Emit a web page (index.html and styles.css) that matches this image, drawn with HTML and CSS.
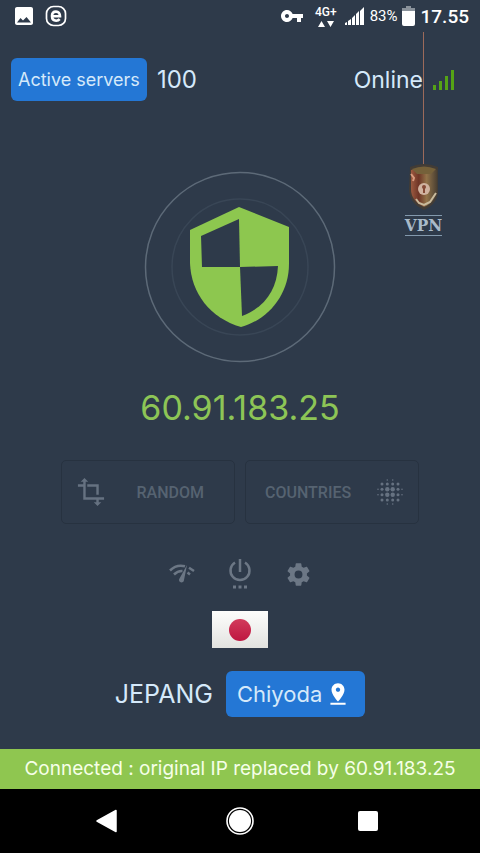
FILE: index.html
```html
<!DOCTYPE html>
<html lang="en">
<head>
<meta charset="utf-8">
<meta name="viewport" content="width=device-width, initial-scale=1">
<title>VPN</title>
<link rel="stylesheet" href="styles.css">
</head>
<body>
<div class="screen">
  <header class="status">
    <div class="status-group notices">
      <svg width="24" height="24" viewBox="0 0 24 24" fill="#fff" aria-hidden="true"><path d="M21 19V5c0-1.1-.9-2-2-2H5c-1.1 0-2 .9-2 2v14c0 1.1.9 2 2 2h14c1.1 0 2-.9 2-2zM5 18.500l3.500-4.500 2.500 2.500L14.500 13l4.500 5.500z"/></svg>
      <svg width="22" height="22" viewBox="0 0 22 22" fill="none" stroke="#fff" aria-hidden="true"><rect x="1.500" y="1.500" width="19" height="19" rx="7" stroke-width="1.700"/><path d="M7 11.300h8c0-3-1.500-4.700-4-4.700s-4 1.700-4 4.500 1.600 4.600 4.200 4.600c1.500 0 2.600-.5 3.500-1.500" stroke-width="2.600"/></svg>
    </div>
    <div class="status-group">
      <svg class="key" width="24" height="24" viewBox="0 0 24 24" fill="#fff" aria-hidden="true"><path d="M12.650 10C11.830 7.670 9.610 6 7 6c-3.310 0-6 2.690-6 6s2.690 6 6 6c2.610 0 4.830-1.670 5.650-4H17v4h4v-4h2v-4H12.650zM7 14c-1.100 0-2-.9-2-2s.9-2 2-2 2 .9 2 2-.9 2-2 2z"/></svg>
      <div class="network">
        <span>4G+</span>
        <svg width="16" height="6" viewBox="0 0 16 6" fill="#fff" aria-hidden="true"><path d="M0 6L3.500 0 7 6zM9 0h7l-3.500 6z"/></svg>
      </div>
      <svg class="signal" width="19" height="18" viewBox="0 0 19 18" fill="#fff" aria-hidden="true"><path d="M0 18v-2l2-1v3zM3 18v-4l3-2v6zM7 18v-7l3-3v10zM11 18V7l3-3v14zM15 18V4l4-4v18z"/></svg>
      <span class="percent">83%</span>
      <svg class="battery" width="13" height="20" viewBox="0 0 13 20" aria-hidden="true"><path d="M4 0h5v2h4v4H0V2h4z" fill="#8a929b"/><path d="M0 5h13v13a2 2 0 0 1-2 2H2a2 2 0 0 1-2-2z" fill="#fff"/></svg>
      <time class="clock">17.55</time>
    </div>
  </header>

  <main class="content">
    <section class="summary">
      <button class="pill servers" type="button">Active servers</button>
      <span class="count">100</span>
      <span class="online">Online</span>
      <svg width="22" height="20" viewBox="0 0 22 20" fill="#55a315" aria-hidden="true"><path d="M0 15h3v5H0zM6 11h3v9H6zM12 6h3v14h-3zM18 0h3v20h-3z"/></svg>
    </section>

    <svg class="shield" width="192" height="192" viewBox="0 0 192 192" aria-hidden="true">
      <circle cx="96" cy="96" r="94.500" fill="none" stroke="#5d6a78" stroke-width="1.500"/>
      <circle cx="96" cy="96" r="68" fill="none" stroke="#394656" stroke-width="1.500"/>
      <path d="M95 36L145 56V93C145 122 126 148 97 156C66 147 47 122 46 92V59Z" fill="#8dc74f"/>
      <path d="M95 48L96 96H58L57 65Z" fill="#2e3a4a"/>
      <path d="M96 96L134 95C133 119 120 137 98 145Z" fill="#2e3a4a"/>
    </svg>

    <p class="address">60.91.183.25</p>

    <div class="choices">
      <button class="choice" type="button">
        <svg width="28" height="30" viewBox="0 0 30 30" fill="none" stroke="#667281" stroke-width="2.600" aria-hidden="true"><path d="M8 3V22H29M1 8H8M11 8H22V18M22 22V28"/><path d="M8 0l4 4H4zM22 30l4-4h-8z" fill="#667281" stroke="none"/></svg>
        <span>RANDOM</span>
      </button>
      <button class="choice" type="button">
        <span>COUNTRIES</span>
        <svg width="26" height="26" viewBox="0 0 26 26" fill="#667281" aria-hidden="true">
          <circle cx="5" cy="5" r="1.500"/><circle cx="10.300" cy="5" r="1.500"/><circle cx="15.700" cy="5" r="1.500"/><circle cx="21" cy="5" r="1.500"/><circle cx="5" cy="21" r="1.500"/><circle cx="10.300" cy="21" r="1.500"/><circle cx="15.700" cy="21" r="1.500"/><circle cx="21" cy="21" r="1.500"/>
          <circle cx="5" cy="10.300" r="1.500"/><circle cx="10.300" cy="10.300" r="2.200"/><circle cx="15.700" cy="10.300" r="2.200"/><circle cx="21" cy="10.300" r="1.500"/>
          <circle cx="5" cy="15.700" r="1.500"/><circle cx="10.300" cy="15.700" r="2.200"/><circle cx="15.700" cy="15.700" r="2.200"/><circle cx="21" cy="15.700" r="1.500"/>
          <circle cx="10.300" cy="1" r=".8"/><circle cx="15.700" cy="1" r=".8"/><circle cx="10.300" cy="25" r=".8"/><circle cx="15.700" cy="25" r=".8"/><circle cx="1" cy="10.300" r=".8"/><circle cx="1" cy="15.700" r=".8"/><circle cx="25" cy="10.300" r=".8"/><circle cx="25" cy="15.700" r=".8"/>
        </svg>
      </button>
    </div>

    <nav class="tools" aria-label="Tools">
      <button class="tool" type="button" aria-label="Network check">
        <svg width="26" height="26" viewBox="0 0 26 26" fill="none" stroke="#6c7785" stroke-width="2.500" aria-hidden="true"><path d="M1 9.500C5 5.500 11 4 16 5.300M20 6.800L25 10M5 13.500C7.500 11 10.500 9.800 13.500 10M18.500 11.500L21 13.500"/><path d="M18 4L15 19a2.500 2.500 0 1 1-4.500-1.500z" fill="#6c7785" stroke="none"/></svg>
      </button>
      <button class="tool" type="button" aria-label="Power">
        <svg width="26" height="32" viewBox="0 0 26 32" fill="none" stroke="#6c7785" stroke-width="2.500" aria-hidden="true"><path d="M13 1v13M8 4.500a9.500 9.500 0 1 0 10 0"/><path d="M6 29h3M11.500 29h3M17 29h3" stroke-width="3"/></svg>
      </button>
      <button class="tool" type="button" aria-label="Settings">
        <svg width="27" height="27" viewBox="0 0 24 24" fill="#6c7785" aria-hidden="true"><path d="M19.430 12.980c.04-.32.07-.64.07-.98s-.03-.66-.07-.98l2.110-1.650c.19-.15.24-.42.12-.64l-2-3.460c-.12-.22-.39-.3-.61-.22l-2.490 1c-.52-.4-1.080-.73-1.690-.98l-.38-2.650C14.460 2.180 14.250 2 14 2h-4c-.25 0-.46.18-.49.42l-.38 2.650c-.61.25-1.170.59-1.690.98l-2.490-1c-.23-.09-.49 0-.61.22l-2 3.460c-.13.22-.07.49.12.64l2.110 1.650c-.04.32-.07.65-.07.98s.03.66.07.98l-2.110 1.650c-.19.15-.24.42-.12.64l2 3.460c.12.22.39.3.61.22l2.490-1c.52.4 1.080.73 1.690.98l.38 2.650c.03.24.24.42.49.42h4c.25 0 .46-.18.49-.42l.38-2.650c.61-.25 1.170-.59 1.690-.98l2.490 1c.23.09.49 0 .61-.22l2-3.460c.12-.22.07-.49-.12-.64l-2.110-1.650zM12 15.500a3.500 3.500 0 1 1 0-7 3.500 3.500 0 0 1 0 7z"/></svg>
      </button>
    </nav>

    <svg class="flag" width="56" height="37" viewBox="0 0 56 37" role="img" aria-label="Japan">
      <defs><linearGradient id="cloth" x2="0" y2="1"><stop offset="0" stop-color="#fdfdfb"/><stop offset=".55" stop-color="#efefed"/><stop offset="1" stop-color="#e2e2df"/></linearGradient><linearGradient id="sun" x2="0" y2="1"><stop offset="0" stop-color="#d23b5b"/><stop offset="1" stop-color="#be1740"/></linearGradient></defs>
      <rect width="56" height="37" fill="url(#cloth)"/><circle cx="28" cy="19" r="11" fill="url(#sun)"/>
    </svg>

    <section class="location">
      <span class="country">JEPANG</span>
      <button class="pill city" type="button">Chiyoda
        <svg width="26" height="26" viewBox="0 0 24 24" fill="#fff" aria-hidden="true"><path d="M18 8c0-3.310-2.690-6-6-6S6 4.690 6 8c0 4.500 6 11 6 11s6-6.500 6-11zm-8 0c0-1.100.9-2 2-2s2 .9 2 2-.89 2-2 2c-1.100 0-2-.9-2-2zM5 20v2h14v-2H5z"/></svg>
      </button>
    </section>
  </main>

  <p class="banner">Connected : original IP replaced by 60.91.183.25</p>

  <nav class="system" aria-label="System">
    <button type="button" aria-label="Back"><svg width="28" height="28" viewBox="0 0 28 28" fill="#fff" stroke="#fff" stroke-width="1.500" stroke-linejoin="round"><path d="M18 3.500V24.500L-1 14Z"/></svg></button>
    <button type="button" aria-label="Home"><svg width="28" height="28" viewBox="0 0 28 28" fill="#fff"><circle cx="14" cy="14" r="13" fill="none" stroke="#fff" stroke-width="1.600"/><circle cx="14" cy="14" r="11"/></svg></button>
    <button type="button" aria-label="Recent apps"><svg width="28" height="28" viewBox="0 0 28 28" fill="#fff"><rect x="4" y="4" width="20" height="20" rx="2"/></svg></button>
  </nav>

  <div class="charm">
    <div class="cord"></div>
    <svg width="32" height="48" viewBox="0 0 32 48" aria-hidden="true">
      <defs><linearGradient id="bronze"><stop offset="0" stop-color="#9c5a40"/><stop offset=".3" stop-color="#6e3526"/><stop offset=".6" stop-color="#927349"/><stop offset="1" stop-color="#4b4032"/></linearGradient></defs>
      <path d="M2 3Q16-3 30 3V25Q31 39 16 46Q1 39 1 25Z" fill="#423c36"/>
      <path d="M3 6Q16 1 29 6V25Q29 37 16 43Q3 37 3 25Z" fill="url(#bronze)"/>
      <path d="M4 5Q16 0 28 5L23 10H9Z" fill="#75613a"/>
      <path d="M3 10L6 14L5 17" fill="none" stroke="#d79a7e" stroke-width="2"/>
      <path d="M8 35L11 39L16 41L22 38L28 29" fill="none" stroke="#c9bb9e" stroke-width="2"/>
      <circle cx="16" cy="25" r="6" fill="#d0b3a0"/><path d="M16 22v7" stroke="#854a36" stroke-width="2"/><circle cx="16" cy="23" r="2" fill="#854a36"/>
    </svg>
    <span class="charm-name">VPN</span>
  </div>
</div>
</body>
</html>
```
FILE: styles.css
```css
* {
  box-sizing: border-box;
}

body {
  margin: 0;
  background: #2e3a4a;
  color: #d5e9fa;
  font-family: Inter, "Open Sans", sans-serif;
}

button {
  border: 0;
  padding: 0;
  background: none;
  color: inherit;
  font: inherit;
}

svg {
  display: block;
  flex: none;
  overflow: visible;
}

p {
  margin: 0;
}

.screen {
  position: relative;
  display: flex;
  flex-direction: column;
  min-height: 100vh;
}

.status {
  display: flex;
  justify-content: space-between;
  height: 32px;
  padding: 0 11px 0 12px;
  color: #fff;
  font-family: Roboto, sans-serif;
}

.status-group {
  display: flex;
  align-items: center;
}

.notices {
  gap: 9px;
}

.key {
  margin-right: 11px;
}

.network {
  display: flex;
  flex-direction: column;
  align-items: center;
  gap: 2px;
  margin-right: 8px;
  font-size: 12px;
  font-weight: 500;
  line-height: 14px;
}

.signal {
  margin-right: 6px;
}

.percent {
  margin-right: 4px;
  font-size: 15px;
}

.battery {
  margin-right: 6px;
}

.clock {
  font-size: 19px;
  font-weight: 500;
}

.content {
  display: flex;
  flex: 1;
  flex-direction: column;
  align-items: center;
  padding: 26px 0 32px;
}

.summary {
  display: flex;
  align-items: center;
  align-self: stretch;
  padding: 0 25px 0 11px;
}

.pill {
  border-radius: 6px;
  background: #2477d5;
}

.servers {
  height: 43px;
  padding: 0 7px;
  font-size: 18px;
}

.count {
  margin-left: 10px;
  font-size: 24px;
}

.online {
  margin-left: auto;
  margin-right: 10px;
  font-size: 23px;
}

.shield {
  margin-top: 70px;
}

.address {
  margin-top: 23px;
  color: #8dc556;
  font-size: 34px;
  line-height: 44px;
}

.choices {
  display: grid;
  grid-template-columns: 1fr 1fr;
  align-self: stretch;
  gap: 10px;
  margin-top: 30px;
  padding: 0 61px;
}

.choice {
  display: flex;
  align-items: center;
  justify-content: space-between;
  height: 64px;
  padding: 0 30px 0 15px;
  border: 1px solid #273240;
  border-radius: 5px;
  color: #566371;
  font-family: Roboto, sans-serif;
  font-size: 16px;
  font-weight: 500;
}

.choice:last-child {
  padding: 0 15px 0 19px;
}

.tools {
  display: flex;
  gap: 32px;
  margin-top: 33px;
}

.tool {
  display: flex;
  align-items: center;
  height: 34px;
}

.flag {
  margin-top: 20px;
}

.location {
  display: flex;
  align-items: center;
  gap: 13px;
  margin-top: 23px;
}

.country {
  font-size: 25px;
}

.city {
  display: flex;
  align-items: center;
  gap: 3px;
  height: 46px;
  padding: 0 14px 0 11px;
  font-size: 22px;
}

.banner {
  background: #8fc650;
  color: #f6ffe8;
  font-size: 19px;
  line-height: 40px;
  text-align: center;
}

.system {
  display: flex;
  align-items: center;
  justify-content: center;
  gap: 100px;
  height: 64px;
  background: #000;
}

.charm {
  position: absolute;
  top: 32px;
  right: 36px;
  display: flex;
  flex-direction: column;
  align-items: center;
  width: 41px;
}

.cord {
  width: 1px;
  height: 132px;
  background: #9c6a5a;
}

.charm-name {
  border-top: 1px solid #8399ad;
  border-bottom: 1px solid #8399ad;
  margin-top: 3px;
  color: #a9bac9;
  font-family: "DejaVu Serif Condensed", "DejaVu Serif", serif;
  font-size: 17px;
  font-weight: 700;
  line-height: 19px;
}
```
